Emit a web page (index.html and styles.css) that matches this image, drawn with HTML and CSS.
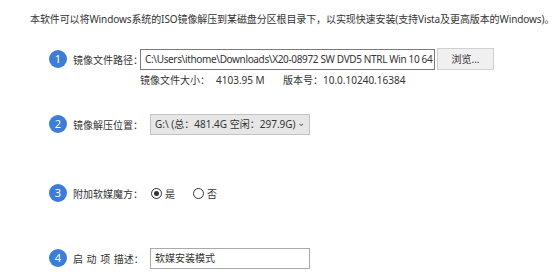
FILE: index.html
```html
<!DOCTYPE html>
<html lang="zh-CN">
<head>
    <meta charset="UTF-8">
    <title>ISO 镜像解压</title>
    <link rel="stylesheet" href="styles.css">
</head>
<body>
    <p class="intro">本软件可以将Windows系统的ISO镜像解压到某磁盘分区根目录下，以实现快速安装(支持Vista及更高版本的Windows)。</p>

    <div class="step step-1">
        <span class="num">1</span>
        <span class="label">镜像文件路径：</span>
        <div class="field path">C:\Users\ithome\Downloads\X20-08972 SW DVD5 NTRL Win 10 64</div>
        <div class="button">浏览...</div>
    </div>
    <div class="info">
        <span class="info-label">镜像文件大小：</span>
        <span class="info-size">4103.95 M</span>
        <span>版本号：10.0.10240.16384</span>
    </div>

    <div class="step step-2">
        <span class="num">2</span>
        <span class="label">镜像解压位置：</span>
        <div class="field select">
            <span>G:\ (总：481.4G 空闲：297.9G)</span>
            <span class="arrow">⌄</span>
        </div>
    </div>

    <div class="step step-3">
        <span class="num">3</span>
        <span class="label short">附加软媒魔方：</span>
        <span class="radio checked"></span><span class="radio-text">是</span>
        <span class="radio"></span><span class="radio-text">否</span>
    </div>

    <div class="step step-4">
        <span class="num">4</span>
        <span class="label spaced">启 动 项 描述：</span>
        <div class="field desc">软媒安装模式</div>
    </div>
</body>
</html>
```

FILE: styles.css
```css
body {
    font-family: "Noto Sans", "Noto Sans CJK SC", sans-serif;
    font-size: 10px;
    color: #333333;
    background-color: #ffffff;
    margin: 0;
    padding: 0;
    white-space: nowrap;
}
.intro {
    margin: 11px 0 0 30px;
    line-height: 16px;
    letter-spacing: -0.1px;
}
.step {
    display: flex;
    align-items: center;
    height: 22px;
    padding-left: 49px;
}
.step-1 { margin-top: 21px; }
.step-2 { margin-top: 23px; }
.step-3 { margin-top: 47px; }
.step-4 { margin-top: 43px; }

.num {
    flex: none;
    width: 18px;
    height: 18px;
    border-radius: 50%;
    background-color: #3d7dd8;
    color: #ffffff;
    font-size: 11px;
    line-height: 18px;
    text-align: center;
    margin-right: 6px;
}
.label {
    flex: none;
    width: 77px;
}
.step-1 .label { width: 67px; }
.label.short { width: 74px; }
.spaced { word-spacing: 1px; }

.field {
    flex: none;
    box-sizing: border-box;
    height: 21px;
    border: 1px solid #a9a9a9;
    background-color: #ffffff;
    padding: 0 4px;
    line-height: 19px;
    overflow: hidden;
}
.path {
    width: 295px;
    border-color: #7a7a7a;
    letter-spacing: -0.35px;
}
.button {
    flex: none;
    box-sizing: border-box;
    width: 57px;
    height: 22px;
    margin-left: 2px;
    border: 1px solid #d0d0d0;
    background-color: #f0f0f0;
    text-align: center;
    line-height: 20px;
}
.info {
    display: flex;
    height: 20px;
    line-height: 20px;
    padding-left: 140px;
}
.info-label { width: 76px; }
.info-size { width: 67px; }

.select {
    display: flex;
    justify-content: space-between;
    width: 160px;
    background-color: #e6e6e6;
    border-color: #c4c4c4;
}
.arrow {
    font-size: 10px;
    line-height: 14px;
    color: #666666;
}
.desc { width: 160px; }

.radio {
    flex: none;
    box-sizing: border-box;
    width: 11px;
    height: 11px;
    border: 1px solid #333333;
    border-radius: 50%;
    margin-left: 4px;
    position: relative;
}
.radio.checked:after {
    content: "";
    position: absolute;
    top: 2px;
    left: 2px;
    width: 5px;
    height: 5px;
    border-radius: 50%;
    background-color: #333333;
}
.radio-text {
    margin-left: 3px;
    margin-right: 14px;
}
```
